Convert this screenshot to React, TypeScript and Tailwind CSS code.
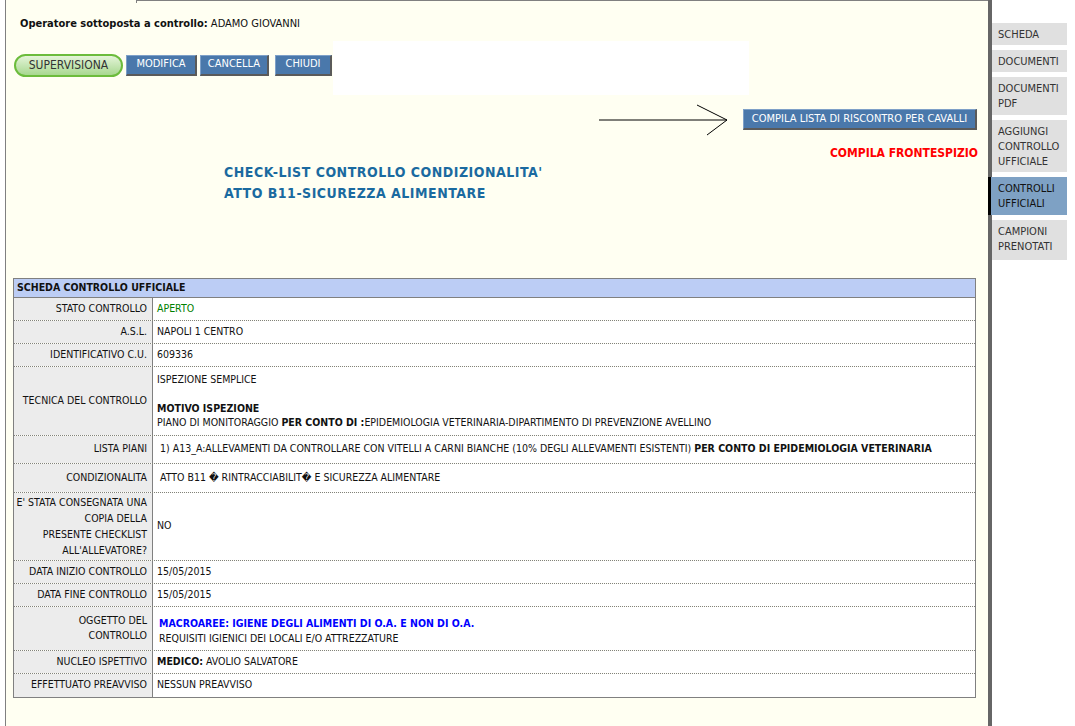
import React from "react";

const rows: { label: React.ReactNode; value: React.ReactNode; h: string }[] = [
  { label: "STATO CONTROLLO", value: <span className="text-[#008000]">APERTO</span>, h: "h-[23px]" },
  { label: "A.S.L.", value: "NAPOLI 1 CENTRO", h: "h-[23px]" },
  { label: "IDENTIFICATIVO C.U.", value: "609336", h: "h-[23px]" },
  {
    label: "TECNICA DEL CONTROLLO",
    value: (
      <div className="py-[6px] leading-[14px]">
        <div>ISPEZIONE SEMPLICE</div>
        <div className="h-[15px]" />
        <div className="font-bold">MOTIVO ISPEZIONE</div>
        <div>
          PIANO DI MONITORAGGIO <b>PER CONTO DI :</b>EPIDEMIOLOGIA VETERINARIA-DIPARTIMENTO DI PREVENZIONE AVELLINO
        </div>
      </div>
    ),
    h: "h-[69px]",
  },
  {
    label: "LISTA PIANI",
    value: (
      <span>
        &nbsp;1) A13_A:ALLEVAMENTI DA CONTROLLARE CON VITELLI A CARNI BIANCHE (10% DEGLI ALLEVAMENTI ESISTENTI){" "}
        <b>PER CONTO DI EPIDEMIOLOGIA VETERINARIA</b>
      </span>
    ),
    h: "h-[28px]",
  },
  { label: "CONDIZIONALITA", value: <span>&nbsp;ATTO B11 � RINTRACCIABILIT� E SICUREZZA ALIMENTARE</span>, h: "h-[29px]" },
  {
    label: (
      <span className="block leading-[16px] whitespace-nowrap">
        E' STATA CONSEGNATA UNA
        <br />
        COPIA DELLA
        <br />
        PRESENTE CHECKLIST
        <br />
        ALL'ALLEVATORE?
      </span>
    ),
    value: "NO",
    h: "h-[68px]",
  },
  { label: "DATA INIZIO CONTROLLO", value: "15/05/2015", h: "h-[23px]" },
  { label: "DATA FINE CONTROLLO", value: "15/05/2015", h: "h-[23px]" },
  {
    label: (
      <span className="block leading-[15px]">
        OGGETTO DEL
        <br />
        CONTROLLO
      </span>
    ),
    value: (
      <div className="leading-[15px] pl-[2px] pt-[6px]">
        <div className="font-bold text-[#0000ff]">MACROAREE: IGIENE DEGLI ALIMENTI DI O.A. E NON DI O.A.</div>
        <div>REQUISITI IGIENICI DEI LOCALI E/O ATTREZZATURE</div>
      </div>
    ),
    h: "h-[44px]",
  },
  {
    label: "NUCLEO ISPETTIVO",
    value: (
      <span>
        <b>MEDICO:</b> AVOLIO SALVATORE
      </span>
    ),
    h: "h-[23px]",
  },
  { label: "EFFETTUATO PREAVVISO", value: "NESSUN PREAVVISO", h: "h-[23px]" },
];

const tabs = [
  { t: ["SCHEDA"], h: "h-[22px]" },
  { t: ["DOCUMENTI"], h: "h-[22px]" },
  { t: ["DOCUMENTI", "PDF"], h: "h-[38px]" },
  { t: ["AGGIUNGI", "CONTROLLO", "UFFICIALE"], h: "h-[52px]" },
  { t: ["CONTROLLI", "UFFICIALI"], h: "h-[38px]", active: true },
  { t: ["CAMPIONI", "PRENOTATI"], h: "h-[40px]" },
];

function BlueButton({ children, className = "" }: { children: React.ReactNode; className?: string }) {
  return (
    <div
      className={`h-[21px] bg-[#4a78ab] text-white border-r-2 border-b-2 border-[#5a5a5a] border-t border-l border-t-[#7ea0c8] border-l-[#7ea0c8] flex items-center justify-center text-[11px] ${className}`}
    >
      {children}
    </div>
  );
}

export default function App() {
  return (
    <div
      className="w-[1075px] h-[726px] bg-white flex text-[#111] overflow-hidden"
      style={{ fontFamily: '"DejaVu Sans Condensed", "Liberation Sans", sans-serif' }}
    >
      {/* MAIN PANEL */}
      <div className="w-[988px] h-[726px] pl-[5px] flex flex-col">
        <div className="flex-1 border-l border-[#808080] bg-[#fffff2] relative">
          <div className="absolute left-[130px] right-0 top-0 h-[3px] border-t border-l border-[#808080]" />

          <div className="pt-[16px] pl-[14px] text-[11px]">
            <b>Operatore sottoposta a controllo:</b> ADAMO GIOVANNI
          </div>

          <div className="flex items-start mt-[8px]">
            <div className="flex items-center pt-[13px] pl-[8px] gap-[3px]">
              <div className="h-[23px] w-[109px] rounded-full border-2 border-[#6cbc3c] bg-gradient-to-b from-[#e4f4d8] to-[#a8d890] text-[#333] text-[12px] flex items-center justify-center">
                SUPERVISIONA
              </div>
              <BlueButton className="w-[71px]">MODIFICA</BlueButton>
              <BlueButton className="w-[69px]">CANCELLA</BlueButton>
              <BlueButton className="w-[57px] ml-[3px]">CHIUDI</BlueButton>
            </div>
            <div className="ml-[1px] w-[416px] h-[54px] bg-white" />
          </div>

          <div className="flex items-center mt-[8px]">
            <svg width="140" height="34" viewBox="0 0 140 34" className="ml-[593px]">
              <line x1="0" y1="17" x2="128" y2="17" stroke="#000" strokeWidth="1" />
              <line x1="98" y1="2" x2="128" y2="17" stroke="#000" strokeWidth="1" />
              <line x1="108" y1="32" x2="128" y2="17" stroke="#000" strokeWidth="1" />
            </svg>
            <BlueButton className="w-[234px] ml-[4px] h-[20px]">COMPILA LISTA DI RISCONTRO PER CAVALLI</BlueButton>
          </div>
          <div className="flex justify-end pr-[10px] mt-[7px]">
            <span className="text-[12px] font-bold text-[#ff0000]">COMPILA FRONTESPIZIO</span>
          </div>

          <div className="pl-[218px] mt-[0px] text-[14px] font-bold text-[#1a6aa0] leading-[21px] tracking-[0.5px]">
            <div>CHECK-LIST CONTROLLO CONDIZIONALITA'</div>
            <div>ATTO B11-SICUREZZA ALIMENTARE</div>
          </div>

          {/* TABLE */}
          <div className="ml-[7px] mt-[74px] w-[963px] border border-[#808080] text-[10.5px]">
            <div className="h-[19px] bg-[#bccdf5] border-b border-[#808080] font-bold flex items-center pl-[3px]">
              SCHEDA CONTROLLO UFFICIALE
            </div>
            {rows.map((r, i) => (
              <div
                key={i}
                className={`flex ${r.h} ${i < rows.length - 1 ? "border-b border-dotted border-[#808080]" : ""}`}
              >
                <div className="w-[139px] shrink-0 bg-[#ececec] border-r border-[#808080] flex items-center justify-end text-right pr-[5px]">
                  {r.label}
                </div>
                <div className="flex-1 bg-white flex items-center pl-[4px]">{r.value}</div>
              </div>
            ))}
          </div>
        </div>
      </div>

      {/* SIDE TABS */}
      <div className="w-[4px] h-[726px] bg-[#666666]" />
      <div className="flex flex-col pt-[23px] gap-[5px] w-[75px]">
        {tabs.map((t, i) => (
          <div
            key={i}
            className={`${t.h} text-[11px] leading-[15px] pl-[6px] pt-[4px] ${
              t.active ? "bg-[#7ea1c4] text-[#111] border-l-[3px] border-black -ml-[4px] pl-[7px]" : "bg-[#e0e0e0] text-[#333]"
            }`}
          >
            {t.t.map((x, j) => (
              <div key={j}>{x}</div>
            ))}
          </div>
        ))}
      </div>
    </div>
  );
}
